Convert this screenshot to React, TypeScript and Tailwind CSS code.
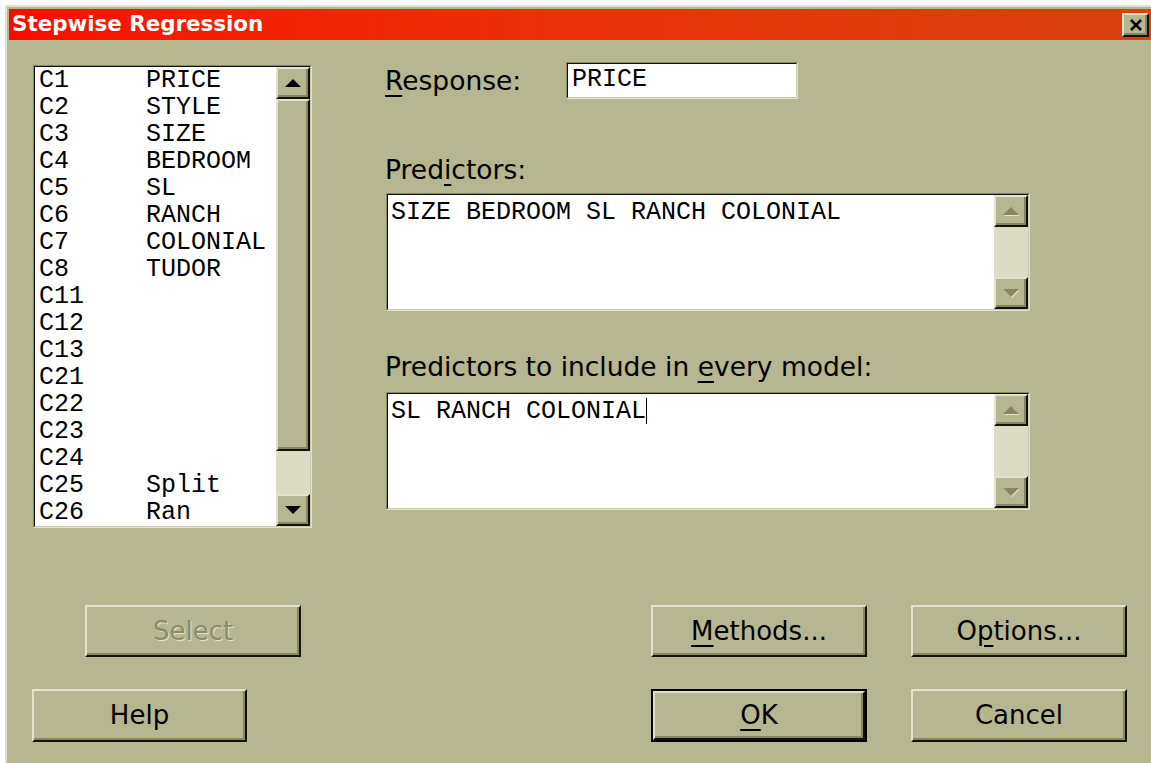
import React from "react";

const sans = { fontFamily: '"DejaVu Sans", Verdana, sans-serif' };
const mono = { fontFamily: '"Liberation Mono", "Courier New", monospace' };

const columns: [string, string][] = [
  ["C1", "PRICE"],
  ["C2", "STYLE"],
  ["C3", "SIZE"],
  ["C4", "BEDROOM"],
  ["C5", "SL"],
  ["C6", "RANCH"],
  ["C7", "COLONIAL"],
  ["C8", "TUDOR"],
  ["C11", ""],
  ["C12", ""],
  ["C13", ""],
  ["C21", ""],
  ["C22", ""],
  ["C23", ""],
  ["C24", ""],
  ["C25", "Split"],
  ["C26", "Ran"],
];

// raised 3d bevel used by buttons and scroll arrows
const bevel =
  "border-t-2 border-l-2 border-b-2 border-r-2 border-t-[#e2e2ce] border-l-[#e2e2ce] border-b-[#121208] border-r-[#121208] shadow-[inset_-2px_-2px_0_#86865f] bg-[#b6b690]";

function Arrow({ up, disabled }: { up?: boolean; disabled?: boolean }) {
  const fill = disabled ? "#86865f" : "#000";
  return (
    <svg width="16" height="9" viewBox="0 0 16 9">
      {disabled && (
        <polygon
          points={up ? "9,1 17,9 1,9" : "1,1 17,1 9,9"}
          fill="#e2e2ce"
        />
      )}
      <polygon points={up ? "8,0 16,8 0,8" : "0,0 16,0 8,8"} fill={fill} />
    </svg>
  );
}

function ScrollButton({ up, disabled }: { up?: boolean; disabled?: boolean }) {
  return (
    <div className={`${bevel} h-[32px] w-full flex items-center justify-center`}>
      <Arrow up={up} disabled={disabled} />
    </div>
  );
}

function Sunken({ className, children }: { className: string; children: React.ReactNode }) {
  return (
    <div className={`border-t border-l border-b border-r border-t-[#86865f] border-l-[#86865f] border-b-[#e2e2ce] border-r-[#e2e2ce] ${className}`}>
      <div className="h-full w-full border-t border-l border-b border-r border-t-[#111] border-l-[#111] border-b-[#c9c9ad] border-r-[#c9c9ad] bg-white flex">
        {children}
      </div>
    </div>
  );
}

function TextArea({ text, caret }: { text: string; caret?: boolean }) {
  return (
    <Sunken className="ml-[1px] w-[644px] h-[118px]">
      <div className="flex-1 pl-[3px] pt-[4px] text-[25px] leading-[27px] text-black" style={mono}>
        <span className="whitespace-pre">{text}</span>
        {caret && <span className="inline-block w-[1px] h-[26px] bg-black align-top" />}
      </div>
      <div className="w-[34px] flex flex-col bg-[#dcdcc4]">
        <ScrollButton up disabled />
        <div className="flex-1" />
        <ScrollButton disabled />
      </div>
    </Sunken>
  );
}

function Button({
  label,
  ul,
  width,
  height,
  disabled,
  isDefault,
}: {
  label: string;
  ul?: number;
  width: string;
  height: string;
  disabled?: boolean;
  isDefault?: boolean;
}) {
  const chars = label.split("");
  const inner = (
    <div
      className={`${bevel} h-full w-full flex items-center justify-center text-[26px] ${
        disabled ? "text-[#8c8c66] [text-shadow:1px_1px_0_#e2e2ce]" : "text-black"
      }`}
      style={sans}
    >
      {chars.map((c, i) => (
        <span key={i} className={i === ul ? "underline underline-offset-[5px] decoration-2" : ""}>
          {c}
        </span>
      ))}
    </div>
  );
  return (
    <div className={`${width} ${height} ${isDefault ? "border-2 border-black" : ""}`}>{inner}</div>
  );
}

function Label({ children }: { children: React.ReactNode }) {
  return (
    <div className="text-[26.5px] leading-[30px] text-black" style={sans}>
      {children}
    </div>
  );
}

const U = ({ children }: { children: React.ReactNode }) => (
  <span className="underline underline-offset-[5px] decoration-2">{children}</span>
);

export default function App() {
  return (
    <div className="w-[1151px] h-[763px] bg-white overflow-hidden">
      <div className="ml-[5px] mt-[5px] h-[758px] border-t-2 border-l-2 border-[#e0e0cc] bg-[#b6b690] flex flex-col">
        {/* Title bar */}
        <div className="ml-[2px] mt-[2px] h-[31px] bg-linear-to-r from-[#fa0a00] to-[#d8420c] flex items-center justify-between">
          <span className="pl-[3px] text-white font-bold text-[21.4px]" style={sans}>
            Stepwise Regression
          </span>
          <div className={`${bevel} w-[27px] h-[24px] mr-[2px] flex items-center justify-center`}>
            <svg width="14" height="12" viewBox="0 0 14 12">
              <path d="M2 1 L12 11 M12 1 L2 11" stroke="#000" strokeWidth="2.6" />
            </svg>
          </div>
        </div>

        <div className="flex">
          {/* Column list */}
          <Sunken className="ml-[26px] mt-[25px] w-[279px] h-[463px]">
            <div className="flex-1 pl-[4px] text-[25px] leading-[27px] text-black" style={mono}>
              {columns.map(([id, name]) => (
                <div key={id} className="flex h-[27px]">
                  <span className="w-[107px]">{id}</span>
                  <span>{name}</span>
                </div>
              ))}
            </div>
            <div className="w-[34px] flex flex-col bg-[#dcdcc4]">
              <ScrollButton up />
              <div className={`${bevel} h-[352px]`} />
              <div className="flex-1" />
              <ScrollButton />
            </div>
          </Sunken>

          {/* Fields */}
          <div className="ml-[73px] flex flex-col">
            <div className="mt-[22px] flex items-center">
              <div className="w-[181px]">
                <Label>
                  <U>R</U>esponse:
                </Label>
              </div>
              <Sunken className="w-[232px] h-[37px]">
                <div className="pl-[4px] text-[25px] leading-[31px] text-black" style={mono}>
                  PRICE
                </div>
              </Sunken>
            </div>

            <div className="mt-[56px] mb-[8px]">
              <Label>
                Pred<U>i</U>ctors:
              </Label>
            </div>
            <TextArea text="SIZE BEDROOM SL RANCH COLONIAL" />

            <div className="mt-[41px] mb-[10px]">
              <Label>
                Predictors to include in <U>e</U>very model:
              </Label>
            </div>
            <TextArea text="SL RANCH COLONIAL" caret />
          </div>
        </div>

        {/* Buttons */}
        <div className="mt-[77px] flex">
          <div className="ml-[78px]">
            <Button label="Select" width="w-[216px]" height="h-[52px]" disabled />
          </div>
          <div className="ml-[350px]">
            <Button label="Methods..." ul={0} width="w-[216px]" height="h-[52px]" />
          </div>
          <div className="ml-[44px]">
            <Button label="Options..." ul={1} width="w-[216px]" height="h-[52px]" />
          </div>
        </div>
        <div className="mt-[32px] flex">
          <div className="ml-[25px]">
            <Button label="Help" width="w-[215px]" height="h-[53px]" />
          </div>
          <div className="ml-[404px]">
            <Button label="OK" ul={0} width="w-[216px]" height="h-[53px]" isDefault />
          </div>
          <div className="ml-[44px]">
            <Button label="Cancel" width="w-[216px]" height="h-[53px]" />
          </div>
        </div>
      </div>
    </div>
  );
}
